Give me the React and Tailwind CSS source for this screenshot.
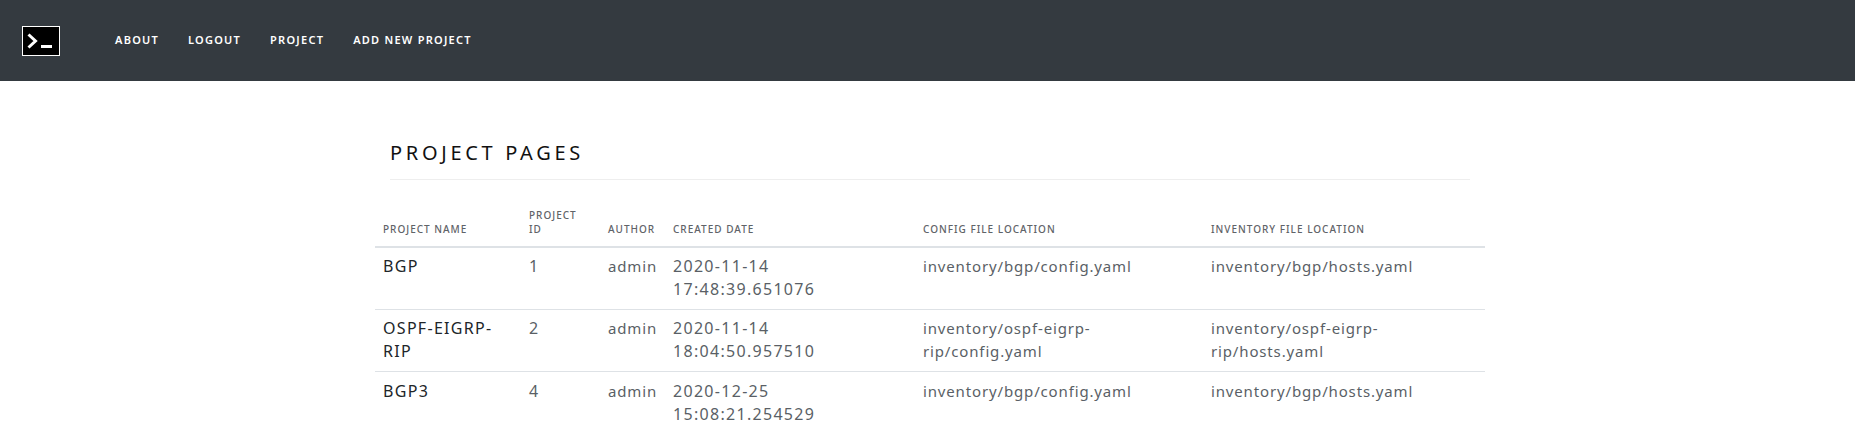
const rows = [
  ["BGP", "1", "admin", "2020-11-14 17:48:39.651076", "inventory/bgp/config.yaml", "inventory/bgp/hosts.yaml"],
  ["OSPF-EIGRP-RIP", "2", "admin", "2020-11-14 18:04:50.957510", "inventory/ospf-eigrp-rip/config.yaml", "inventory/ospf-eigrp-rip/hosts.yaml"],
  ["BGP3", "4", "admin", "2020-12-25 15:08:21.254529", "inventory/bgp/config.yaml", "inventory/bgp/hosts.yaml"],
];
const heads = ["Project Name", "Project ID", "Author", "Created Date", "Config File Location", "Inventory File Location"];
const nav = ["About", "Logout", "Project", "Add New Project"];
const cellStyle = [
  "text-[#212529] text-[16px] tracking-[1.3px]",
  "text-[#5a5f66] text-[16px] tracking-[0.8px]",
  "text-[#5a5f66] text-[15px] tracking-[0.85px]",
  "text-[#5a5f66] text-[16px] tracking-[1.3px] pr-[80px]",
  "text-[#5a5f66] text-[15px] tracking-[0.85px]",
  "text-[#5a5f66] text-[15px] tracking-[0.85px]",
];

export default function App() {
  return (
    <div className="min-h-[441px] overflow-hidden bg-white font-['Noto_Sans',sans-serif]">
      <nav className="flex h-[81px] items-center bg-[#343a40] pl-[22px]">
        <div className="mr-[55px] flex h-[30px] w-[38px] items-center justify-center border border-white bg-black">
          <svg width="30" height="20" viewBox="0 0 30 20" fill="none">
            <path d="M2.5 3.5 L9.5 10 L2.5 16.5" stroke="#fff" strokeWidth="3" />
            <rect x="15" y="14" width="11" height="3" fill="#fff" />
          </svg>
        </div>
        <ul className="flex gap-[29px]">
          {nav.map((n) => (
            <li key={n} className="text-[11px] font-semibold uppercase tracking-[1.25px] text-white">{n}</li>
          ))}
        </ul>
      </nav>
      <main className="ml-[375px] w-[1110px] pt-[62px]">
        <div className="mx-[15px] w-[1080px] border-b border-[#eeeeee] pb-[16px]">
          <h1 className="text-[20px] leading-[20px] font-normal uppercase tracking-[3.7px] text-[#111111]">Project Pages</h1>
        </div>
        <table className="mt-[28px] w-full table-fixed border-collapse">
          <colgroup>
            <col className="w-[146px]" />
            <col className="w-[79px]" />
            <col className="w-[65px]" />
            <col className="w-[250px]" />
            <col className="w-[288px]" />
            <col className="w-[282px]" />
          </colgroup>
          <thead>
            <tr className="border-b-2 border-[#dee2e6]">
              {heads.map((h, j) => (
                <th key={h} className={`pl-2 ${j === 1 ? "pr-[14px]" : "pr-2"} pb-[10px] text-left align-bottom text-[10px] leading-[14px] font-medium uppercase tracking-[1px] text-[#5f6368]`}>{h}</th>
              ))}
            </tr>
          </thead>
          <tbody>
            {rows.map((r, i) => (
              <tr key={r[0]} className={i < 2 ? "border-b border-[#dee2e6]" : ""}>
                {r.map((c, j) => (
                  <td key={j} className={`pl-2 pr-2 ${i === 2 ? "pt-[8px]" : "pt-[7px]"} pb-[8px] align-top leading-[23px] ${cellStyle[j]}`}>{c}</td>
                ))}
              </tr>
            ))}
          </tbody>
        </table>
      </main>
    </div>
  );
}
